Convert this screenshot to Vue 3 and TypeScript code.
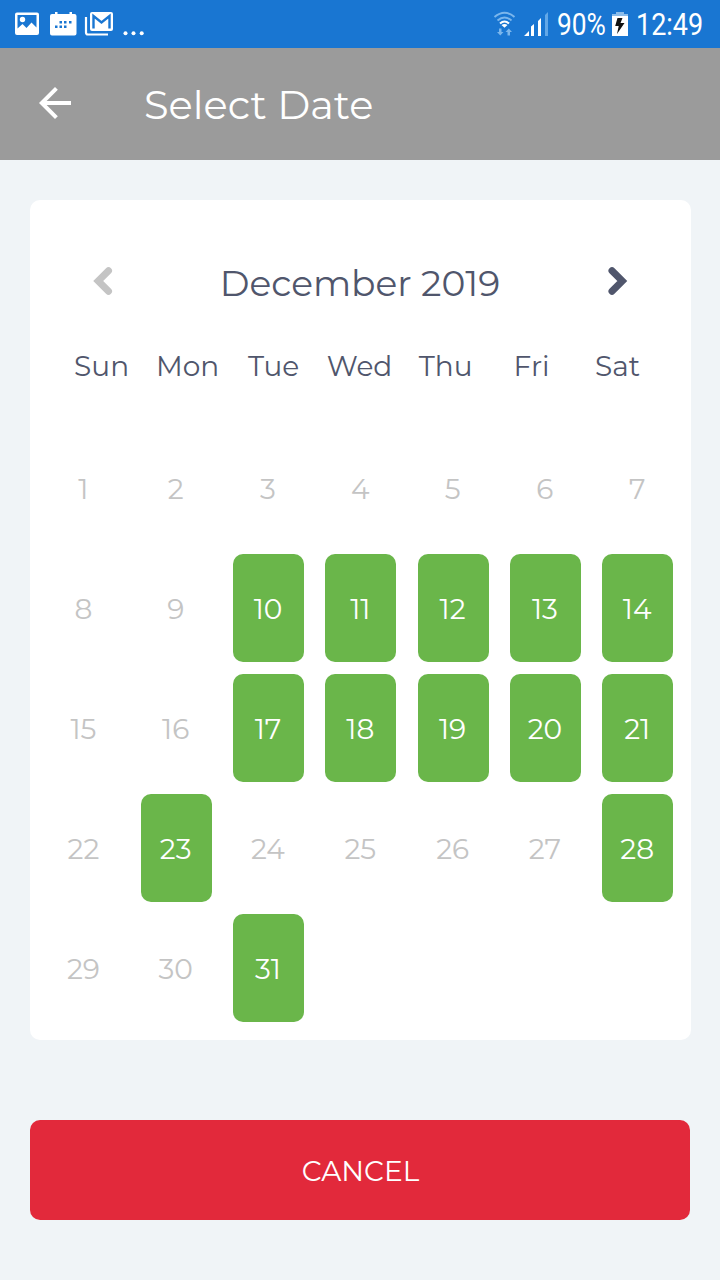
<script setup lang="ts">
interface Day {
  n: number
  open: boolean
}

const weekdays: string[] = ['Sun', 'Mon', 'Tue', 'Wed', 'Thu', 'Fri', 'Sat']
const openDays = new Set<number>([10, 11, 12, 13, 14, 17, 18, 19, 20, 21, 23, 28, 31])
const days: Day[] = Array.from({ length: 31 }, (_, i) => ({ n: i + 1, open: openDays.has(i + 1) }))
</script>

<template>
  <div class="screen">
    <div class="status">
      <div class="notices">
        <svg width="150" height="48" viewBox="0 0 150 48" fill="#fff">
          <path fill-rule="evenodd" d="M17 12.500h20q2 0 2 2v18.500q0 2-2 2H17q-2 0-2-2V14.500q0-2 2-2zM17.500 15v13.500l5-4.500 4 4 5-5.500 5 5V15z" />
          <circle cx="22.500" cy="19.500" r="2.700" />
          <path d="M52 14h3v-2h2.500v2h12v-2H72v2h2.500q2 0 2 2v17.500q0 2-2 2H52q-2 0-2-2V16q0-2 2-2z" />
          <g fill="#1976d2">
            <rect x="59.500" y="21" width="2.500" height="2.500" /><rect x="64" y="21" width="2.500" height="2.500" /><rect x="69" y="21" width="2.500" height="2.500" />
            <rect x="55" y="25.500" width="2.500" height="2.500" /><rect x="59.500" y="25.500" width="2.500" height="2.500" /><rect x="64" y="25.500" width="2.500" height="2.500" />
          </g>
          <path d="M86 17v15.500q0 2 2 2h20" fill="none" stroke="#fff" stroke-width="2.200" />
          <rect x="90" y="12" width="23" height="19" rx="2" />
          <path d="M93.500 28.500V16l8 6.500 8-6.500v12.500" fill="none" stroke="#1976d2" stroke-width="2.400" />
          <circle cx="125.500" cy="33.300" r="2" /><circle cx="133.500" cy="33.300" r="2" /><circle cx="141.700" cy="33.300" r="2" />
        </svg>
      </div>
      <div class="system">
        <svg width="58" height="48" viewBox="492 0 58 48" fill="none">
          <g stroke="#7bb6ec" stroke-width="2">
            <path d="M494.500 17Q504.500 8.500 514.500 17" />
            <path d="M497.500 20.500Q504.500 14.500 511.500 20.500" />
          </g>
          <path d="M500 23.500Q504.500 19.500 509 23.500" stroke="#fff" stroke-width="2" />
          <path d="M501.500 25l3 2.800 3-2.800Q504.500 22.800 501.500 25z" fill="#fff" />
          <path d="M499 28.500h2.500v3.500h2l-3.200 3.500-3.300-3.500h2zM507.500 35.500h2.500v-3.500h2l-3.200-3.500-3.300 3.500h2z" fill="#7bb6ec" />
          <path d="M524 36l5-5v5zM531 26.500l3-2.500v12h-3zM538 21l3-3v18h-3z" fill="#fff" />
          <path d="M545 15l3-3v24h-3z" fill="#63a8e8" />
        </svg>
        <span class="battery"><span>90%</span></span>
        <svg width="18" height="48" viewBox="611 0 18 48">
          <path d="M616 12h8v2h4v3h-16v-3h4z" fill="#8bbcea" />
          <path d="M612 16h16v20h-16z" fill="#fff" />
          <path d="M617.500 18h5l-2 5h4l-7.500 11 1.700-8h-3.500z" fill="#111" />
        </svg>
        <span class="clock"><span>12:49</span></span>
      </div>
    </div>

    <header class="bar">
      <svg class="back" width="48" height="48" viewBox="0 0 24 24" fill="#fff">
        <path d="M20 11H7.830l5.590-5.590L12 4l-8 8 8 8 1.410-1.410L7.830 13H20v-2z" />
      </svg>
      <h1>Select Date</h1>
    </header>

    <main class="card">
      <div class="month">
        <svg width="30" height="40" viewBox="0 0 30 40"><path d="M19.500 9.700L9.200 20l10.300 10.300" stroke="#c4c4c4" /></svg>
        <h2>December 2019</h2>
        <svg width="30" height="40" viewBox="0 0 30 40"><path d="M9 9.700L19.300 20 9 30.300" stroke="#50566c" /></svg>
      </div>
      <div class="weekdays">
        <span v-for="name in weekdays" :key="name">{{ name }}</span>
      </div>
      <div class="days">
        <div v-for="day in days" :key="day.n" class="day" :class="{ open: day.open }">{{ day.n }}</div>
      </div>
    </main>

    <button class="cancel" type="button">CANCEL</button>
  </div>
</template>

<style>
body {
  margin: 0;
  background: #f0f4f7;
}
</style>

<style scoped>
.screen {
  width: 720px;
  height: 1280px;
  overflow: hidden;
  background: #f0f4f7;
  font-family: Montserrat, Inter, "Open Sans", sans-serif;
  font-weight: 400;
}
.status {
  height: 48px;
  background: #1976d2;
  color: #fff;
  display: flex;
  justify-content: space-between;
  font: 400 31px/48px Roboto, sans-serif;
}
.system {
  display: flex;
  width: 228px;
}
.status svg {
  display: block;
  flex: none;
}
.battery,
.clock {
  flex: none;
  margin-left: 7px;
  padding-top: 1px;
}
.battery {
  width: 54px;
}
.clock {
  width: 80px;
}
.battery span,
.clock span {
  display: inline-block;
  transform: scaleX(0.85);
  transform-origin: left;
}
.clock span {
  transform: scaleX(0.87);
}
.bar {
  height: 112px;
  box-sizing: border-box;
  background: #9b9b9b;
  display: flex;
  align-items: center;
  padding: 0 31px;
}
.back {
  display: block;
  margin-top: -2px;
}
h1 {
  margin: 0 0 0 65px;
  color: #fff;
  font-size: 40px;
  font-weight: 400;
  white-space: nowrap;
}
.card {
  box-sizing: border-box;
  width: 661px;
  height: 840px;
  margin: 40px 0 0 30px;
  padding-top: 56px;
  background: #fff;
  border-radius: 10px;
}
.month {
  height: 50px;
  padding: 0 58px 0 59px;
  display: flex;
  align-items: center;
  justify-content: space-between;
}
.month svg path {
  fill: none;
  stroke-width: 7;
  stroke-linecap: round;
  stroke-linejoin: miter;
}
.month h2 {
  margin: 4px 2px 0 0;
  color: #50566c;
  font-size: 36px;
  font-weight: 400;
  white-space: nowrap;
}
.weekdays {
  display: grid;
  grid-template-columns: repeat(7, 86px);
  width: 602px;
  height: 40px;
  margin: 40px 0 0 28.600px;
  color: #50566c;
  font-size: 28px;
  line-height: 40px;
  text-align: center;
}
.days {
  display: grid;
  grid-template-columns: repeat(7, 71px);
  grid-auto-rows: 108px;
  justify-content: space-between;
  row-gap: 12px;
  width: 624.800px;
  margin: 48px 0 0 18.400px;
}
.day {
  display: flex;
  align-items: center;
  justify-content: center;
  padding: 2px 1px 0 0;
  box-sizing: border-box;
  border-radius: 10px;
  color: #c4c4c4;
  font-size: 28px;
}
.day.open {
  background: #6ab64a;
  color: #fff;
}
.cancel {
  display: block;
  width: 660px;
  height: 100px;
  margin: 80px 0 0 30px;
  padding: 1px 0 0 1px;
  border: 0;
  border-radius: 10px;
  background: #e2293b;
  color: #fff;
  font-family: inherit;
  font-size: 28px;
  font-weight: 400;
}
</style>
